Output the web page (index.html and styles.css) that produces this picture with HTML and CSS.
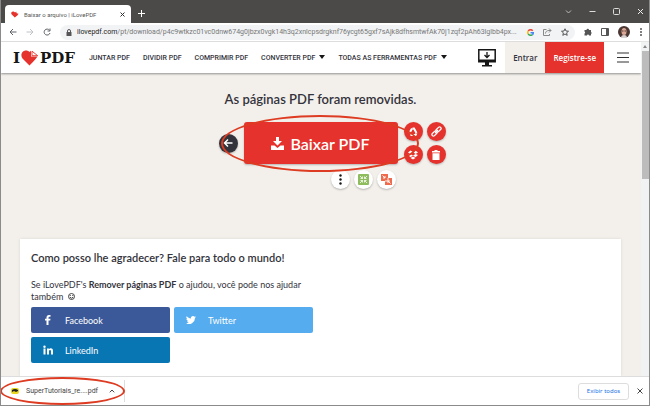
FILE: index.html
```
<!DOCTYPE html>
<html lang="pt">
<head>
  <meta charset="utf-8">
  <title>Baixar o arquivo | iLovePDF</title>
  <link rel="stylesheet" href="styles.css">
</head>
<body>
  <div class="window">
    <!-- Tab strip -->
    <div class="tabs">
      <div class="tab">
        <svg class="favicon" viewBox="0 0 17 15"><path fill="#e5322d" d="M8 14 1 7C-1 3 3-1 7 2l2 1 2-2 1 4 4 1-2 3z"/></svg>
        <span class="tab-title">Baixar o arquivo | iLovePDF</span>
        <button class="icon-btn" aria-label="Fechar guia"><svg width="5" height="5" viewBox="0 0 5 5"><path d="M.5.5l4 4m0-4l-4 4" stroke="#333"/></svg></button>
      </div>
      <button class="icon-btn new-tab" aria-label="Nova guia"><svg width="7" height="7" viewBox="0 0 7 7"><path d="M3.5 0v7M0 3.5h7" stroke="#fff"/></svg></button>
      <div class="window-controls">
        <button class="icon-btn" aria-label="Pesquisar guias"><svg width="7" height="7" viewBox="0 0 7 7" fill="none" stroke="#bbb"><path d="M1 2.500l2.500 2.500L6 2.500"/></svg></button>
        <button class="icon-btn" aria-label="Minimizar"><svg width="7" height="7" viewBox="0 0 7 7"><path d="M0.500 3.500h6" stroke="#ddd"/></svg></button>
        <button class="icon-btn" aria-label="Maximizar"><svg width="7" height="7" viewBox="0 0 7 7"><rect x=".5" y=".5" width="6" height="6" rx="1" fill="none" stroke="#ddd"/></svg></button>
        <button class="icon-btn" aria-label="Fechar"><svg width="7" height="7" viewBox="0 0 7 7"><path d="M1 1l5 5m0-5L1 6" stroke="#eee"/></svg></button>
      </div>
    </div>

    <!-- Address bar -->
    <div class="toolbar">
      <button class="icon-btn" aria-label="Voltar"><svg width="8" height="8" viewBox="0 0 8 8" fill="none" stroke="#5f6368"><path d="M7.500 4H1m3-3L1 4l3 3"/></svg></button>
      <button class="icon-btn" aria-label="Avançar"><svg width="8" height="8" viewBox="0 0 8 8" fill="none" stroke="#bfc2c5"><path d="M.5 4H7M4 1l3 3-3 3"/></svg></button>
      <button class="icon-btn" aria-label="Recarregar"><svg width="8" height="8" viewBox="0 0 8 8" fill="none" stroke="#5f6368"><path d="M6.500 2.200A3 3 0 1 0 7 5M7 .5v2.500H4.500"/></svg></button>
      <div class="address">
        <svg width="6" height="7" viewBox="0 0 6 7"><path fill="#555" d="M.5 3h5v4h-5z"/><path d="M1.500 3V2a1.500 1.500 0 0 1 3 0v1" fill="none" stroke="#555"/></svg>
        <span class="url"><b>ilovepdf.com</b>/pt/download/p4c9wtkzc01vc0dnw674g0jbzx0vgk14h3q2xnlcpsdrgknf76ycgt65gxf7sAjk8dfhsmtwfAk70j1zqf2pAh63lglbb4px...</span>
        <svg class="google" width="7" height="7" viewBox="0 0 14 14" fill="none" stroke-width="3"><path stroke="#ea4335" d="M11.500 3.500A5.500 5.500 0 0 0 2.500 4"/><path stroke="#fbbc05" d="M2.500 4a5.500 5.500 0 0 0 0 6"/><path stroke="#34a853" d="M2.500 10a5.500 5.500 0 0 0 8.500 1"/><path stroke="#4285f4" d="M11 11.500a5.500 5.500 0 0 0 1.500-4H7"/></svg>
        <svg width="9" height="8" viewBox="0 0 9 8" fill="none" stroke="#888"><path d="M3.500 1.500h-3v6h6V6M2.500 5.500c0-2 1.500-3 3.500-3h2M6 .5l2 2-2 2"/></svg>
        <svg width="8" height="8" viewBox="0 0 16 16" fill="none" stroke="#555" stroke-width="2"><path d="M8 1.500l2 4.500 5 .5-3.800 3.200 1.200 5L8 12l-4.400 2.700 1.200-5L1 6.500 6 6z"/></svg>
      </div>
      <button class="icon-btn" aria-label="Extensões"><svg width="8" height="8" viewBox="0 0 16 16"><path fill="#555" d="M1 4h4a2.500 2.500 0 1 1 5 0h4v4a2.500 2.500 0 0 1 0 4v3h-4a2 2 0 0 0-4 0H1v-4a2.200 2.200 0 0 0 0-4z"/></svg></button>
      <button class="icon-btn" aria-label="Painel lateral"><svg width="8" height="8" viewBox="0 0 8 8"><path fill="none" stroke="#555" d="M.5.5h7v7h-7z"/><path fill="#555" d="M5 1h3v6H5z"/></svg></button>
      <button class="icon-btn" aria-label="Perfil"><svg width="12" height="12" viewBox="0 0 12 12"><circle cx="6" cy="6" r="6" fill="#4a3733"/><ellipse cx="6" cy="5.500" rx="2.500" ry="3.500" fill="#dba794"/><path d="M3 12q0-3 3-3t3 3z" fill="#d8cfd0"/><path d="M4 5h1.500M6.500 5H8" stroke="#503832"/></svg></button>
      <button class="icon-btn" aria-label="Menu"><svg width="4" height="8" viewBox="0 0 4 8" fill="#555"><circle cx="2" cy="1" r="1"/><circle cx="2" cy="4" r="1"/><circle cx="2" cy="7" r="1"/></svg></button>
    </div>

    <div class="viewport">
      <div class="page">
        <header class="site-header">
          <a href="#" class="logo" aria-label="I love PDF">
            <span>I</span>
            <svg width="18" height="16" viewBox="0 0 18 16"><path fill="#e5322d" d="M8.500 15.500 1.500 8.500C-1 5 1 .5 5 .5c1.500 0 2.500.5 3.500 1.500L10 .800V6.500h6.500q-1 2-8 9z"/><path fill="#fff" stroke="#e5322d" stroke-width=".9" d="M11 1.200 16.700 5.700H11z"/></svg>
            <span>PDF</span>
          </a>
          <nav class="menu">
            <a href="#">JUNTAR PDF</a>
            <a href="#">DIVIDIR PDF</a>
            <a href="#">COMPRIMIR PDF</a>
            <a href="#" class="has-sub">CONVERTER PDF</a>
            <a href="#" class="has-sub">TODAS AS FERRAMENTAS PDF</a>
          </nav>
          <a href="#" class="desktop" aria-label="Desktop"><svg width="18" height="18" viewBox="0 0 18 18"><path d="M.8.800h16.400v12H.8z" fill="none" stroke="#161616" stroke-width="1.500"/><path d="M1 10.500h16V13H1zM7 13h4v3H7zM4 16h10v1.500H4z" fill="#161616"/><path d="M9 3v5M6.500 6L9 8.500 11.500 6" fill="none" stroke="#161616" stroke-width="1.300"/></svg></a>
          <a href="#" class="login">Entrar</a>
          <a href="#" class="signup">Registre-se</a>
          <button class="icon-btn burger" aria-label="Abrir menu"><svg width="12" height="11" viewBox="0 0 12 11"><path d="M0 1h12M0 5.500h12M0 10h12" stroke="#333" stroke-width="1.200"/></svg></button>
        </header>

        <main>
          <h1>As páginas PDF foram removidas.</h1>
          <div class="download">
            <button class="round back" aria-label="Voltar"><svg width="10" height="10" viewBox="0 0 10 10" fill="none" stroke="#fff" stroke-width="1.500"><path d="M9.500 5H1.500M5 1.500L1.500 5 5 8.500"/></svg></button>
            <button class="download-btn">
              <svg width="13" height="13" viewBox="0 0 13 13" fill="#fff"><path d="M5 0h3v4h3L6.500 8.500 2 4h3z"/><path d="M0 8.500h3.500l3 2.500 3-2.500H13V13H0z"/></svg>
              Baixar PDF
            </button>
            <div class="share">
              <button class="round red" aria-label="Google Drive"><svg width="10" height="10" viewBox="0 0 10 10" fill="none" stroke="#fff" stroke-width="2"><path d="M4 1.500L1.500 6M4.500 1.500h1.500L8.500 6M2.500 8h5L8.500 6"/></svg></button>
              <button class="round red" aria-label="Copiar link"><svg width="11" height="11" viewBox="0 0 22 22" fill="none" stroke="#fff" stroke-width="2.500"><rect x="9" y="4" width="12" height="6" rx="3" transform="rotate(-45 15 7)"/><rect x="1" y="12" width="12" height="6" rx="3" transform="rotate(-45 7 15)"/><path d="M8 14l6-6"/></svg></button>
              <button class="round red" aria-label="Dropbox"><svg width="10" height="10" viewBox="0 0 10 10" fill="#fff"><path d="M2.500.5L5 2 2.500 4 0 2.500zM7.500.5L10 2.500 7.500 4 5 2zM0 5l2.500-1L5 5.500 2.500 7.200zM10 5L7.500 4 5 5.500l2.500 1.700zM2.500 8L5 6.500 7.500 8 5 9.500z"/></svg></button>
              <button class="round red" aria-label="Excluir"><svg width="8" height="10" viewBox="0 0 8 10" fill="#fff"><path d="M2.500 0h3v1H8v1.500H0V1h2.500zM.5 3.200h7V10h-7z"/></svg></button>
            </div>
            <div class="more">
              <button class="round white" aria-label="Mais"><svg width="3" height="11" viewBox="0 0 3 11" fill="#161616"><circle cx="1.500" cy="1.500" r="1.200"/><circle cx="1.500" cy="5.500" r="1.200"/><circle cx="1.500" cy="9.500" r="1.200"/></svg></button>
              <button class="round white" aria-label="Comprimir PDF"><svg width="11" height="11" viewBox="0 0 11 11"><rect width="11" height="11" rx="1" fill="#8fbc5d"/><path d="M2 2l2.500 2.500M9 2L6.500 4.500M2 9l2.500-2.500M9 9L6.500 6.500M4.500 2.500v2h-2M6.500 2.500v2h2M4.500 8.500v-2h-2M6.500 8.500v-2h2" fill="none" stroke="#fff" stroke-width=".8"/></svg></button>
              <button class="round white" aria-label="Juntar PDF"><svg width="11" height="11" viewBox="0 0 11 11"><path d="M0 0h7v4h4v7H4V7H0z" fill="#ee6c4d"/><path d="M1.500 1.500L4 4M4 2v2H2M9.500 9.500L7 7M7 9V7h2M4 7h3V4" fill="none" stroke="#fff" stroke-width=".9"/></svg></button>
            </div>
            <span class="mark"></span>
          </div>

          <section class="thanks">
            <h2>Como posso lhe agradecer? Fale para todo o mundo!</h2>
            <p>Se iLovePDF's <strong>Remover páginas PDF</strong> o ajudou, você pode nos ajudar<br>
              também <svg class="smile" width="7" height="7" viewBox="0 0 14 14" fill="none" stroke="#333" stroke-width="1.800"><circle cx="7" cy="7" r="6"/><path d="M3.500 8q3.500 5 7 0M4.500 4v2M9.500 4v2"/></svg></p>
            <div class="social">
              <a href="#" class="facebook"><svg viewBox="0 0 10 10"><path fill="#fff" d="M3.500 10V5.500H2V3.800h1.500V2.500Q3.500 0 6 0h1.500v1.700h-1q-1 0-1 1v1.100h2l-.3 1.700H5.500V10z"/></svg>Facebook</a>
              <a href="#" class="twitter"><svg viewBox="0 0 24 24"><path fill="#fff" d="M24 4.600c-.9.400-1.800.7-2.800.8 1-.6 1.800-1.600 2.200-2.700-1 .6-2 1-3.100 1.200a4.900 4.900 0 0 0-8.400 4.500C7.700 8.200 4.100 6.300 1.700 3.200a4.900 4.900 0 0 0 1.500 6.600c-.8 0-1.600-.2-2.200-.6 0 2.300 1.600 4.400 3.900 4.900-.7.200-1.500.2-2.200.1.600 2 2.400 3.400 4.600 3.400A9.900 9.900 0 0 1 0 19.500a14 14 0 0 0 21.500-12.400c1-.7 1.800-1.600 2.500-2.500z"/></svg>Twitter</a>
              <a href="#" class="linkedin"><svg viewBox="0 0 10 10" fill="#fff"><path d="M.5 3.500h2V9.500h-2zM4 3.500h1.900v.8Q6.500 3.300 7.800 3.300 10 3.300 10 6v3.500H8V6.300Q8 5 7 5T6 6.300v3.200H4z"/><circle cx="1.500" cy="1.700" r="1.200"/></svg>LinkedIn</a>
            </div>
          </section>
        </main>
      </div>
      <div class="scrollbar"><span class="arrow"></span><span class="thumb"></span></div>
    </div>

    <!-- Downloads bar -->
    <footer class="downloads">
      <div class="file">
        <svg width="8" height="6" viewBox="0 0 8 6"><rect width="8" height="6" rx="2" fill="#e8d51d"/><path d="M1 2q3-2 6 0v1L5 4 3 3 1 4z" fill="#222"/></svg>
        <span>SuperTutoriais_re....pdf</span>
        <button class="icon-btn" aria-label="Opções do arquivo"><svg width="6" height="4" viewBox="0 0 6 4"><path d="M.8 3.300L3 1l2.200 2.300" fill="none" stroke="#444"/></svg></button>
        <span class="mark"></span>
      </div>
      <button class="show-all">Exibir todos</button>
      <button class="icon-btn" aria-label="Fechar barra"><svg width="6" height="6" viewBox="0 0 6 6"><path d="M.5.5l5 5m0-5l-5 5" stroke="#444"/></svg></button>
    </footer>
  </div>
</body>
</html>
```
FILE: styles.css
```
* {
  box-sizing: border-box;
}
body {
  margin: 0;
  font-family: Lato, sans-serif;
  color: #33333b;
}
a {
  color: inherit;
  text-decoration: none;
}
svg {
  display: block;
  flex: none;
}
button {
  font-family: inherit;
  padding: 0;
  border: none;
  cursor: pointer;
}
.icon-btn {
  background: none;
  display: flex;
  align-items: center;
  justify-content: center;
}
.window {
  display: flex;
  flex-direction: column;
  height: 100vh;
  border: 1px solid #8b8b8b;
  border-top: none;
  overflow: hidden;
  background: #fff;
}

/* browser tabs */
.tabs {
  display: flex;
  align-items: center;
  flex: none;
  height: 23px;
  padding-left: 4px;
  background: #4b4a48;
}
.tab {
  display: flex;
  align-items: center;
  align-self: flex-end;
  width: 126px;
  height: 18px;
  padding: 0 6px;
  gap: 5px;
  border-radius: 4px 4px 0 0;
  background: #fff;
}
.favicon {
  width: 8px;
  height: 7px;
}
.tab-title {
  flex: 1;
  font-family: Roboto, sans-serif;
  font-size: 6px;
  white-space: nowrap;
  color: #555;
}
.new-tab {
  margin: 4px 0 0 7px;
}
.window-controls {
  display: flex;
  gap: 17px;
  margin-left: auto;
  padding-right: 5px;
}

/* address bar */
.toolbar {
  display: flex;
  align-items: center;
  flex: none;
  gap: 9px;
  height: 19px;
  padding: 0 6px 0 8px;
  border-bottom: 1px solid #e4e4e4;
}
.address {
  display: flex;
  align-items: center;
  flex: 1;
  min-width: 0;
  gap: 9px;
  height: 15px;
  padding: 0 6px;
  border-radius: 8px;
  background: #f1f3f4;
}
.url {
  flex: 1;
  margin-left: -4px;
  min-width: 0;
  overflow: hidden;
  font-family: Roboto, sans-serif;
  font-size: 7px;
  white-space: nowrap;
  color: #777;
}
.url b {
  font-weight: 400;
  color: #222;
}

.viewport {
  display: flex;
  flex: 1;
  min-height: 0;
}
.page {
  display: flex;
  flex-direction: column;
  flex: 1;
  min-width: 0;
  background: #f3f0ec;
}

/* site header */
.site-header {
  display: flex;
  align-items: center;
  flex: none;
  height: 31px;
  padding-left: 12px;
  background: #fff;
  box-shadow: 0 1px 2px rgba(0, 0, 0, 0.4);
}
.logo {
  display: flex;
  align-items: center;
  gap: 1px;
  font-family: "DejaVu Serif", serif;
  font-size: 15px;
  font-weight: 700;
  color: #161616;
}
.menu {
  display: flex;
  gap: 13px;
  margin-left: 14px;
  font-family: Roboto, sans-serif;
  font-size: 7px;
  font-weight: 500;
  white-space: nowrap;
}
.has-sub::after {
  content: "";
  display: inline-block;
  margin-left: 4px;
  border: 3px solid transparent;
  border-top: 4px solid #161616;
  border-bottom: none;
  vertical-align: 1px;
}
.desktop {
  margin-left: auto;
  margin-right: 9px;
}
.login,
.signup {
  display: flex;
  align-items: center;
  align-self: stretch;
  padding: 0 8px;
  font-family: "Open Sans", sans-serif;
  font-size: 8px;
  font-weight: 600;
}
.login {
  background: #f3f0ec;
}
.signup {
  background: #e5322d;
  color: #fff;
}
.burger {
  margin: 0 12px 0 13px;
}

main {
  display: flex;
  flex-direction: column;
  flex: 1;
  min-height: 0;
  padding: 16px 20px 0 19px;
}
h1 {
  margin: 0;
  font-size: 13px;
  line-height: 20px;
  font-weight: 600;
  text-align: center;
}
.download {
  position: relative;
  display: grid;
  grid-template-columns: 1fr auto 1fr;
  align-items: center;
  gap: 6px;
  margin-top: 13px;
}
.round {
  display: flex;
  align-items: center;
  justify-content: center;
  width: 19px;
  height: 19px;
  border-radius: 50%;
  box-shadow: 0 1px 2px rgba(0, 0, 0, 0.25);
}
.back {
  justify-self: end;
  background: #33333b;
}
.red {
  background: #e5322d;
}
.white {
  background: #fff;
}
.download-btn {
  display: flex;
  align-items: center;
  justify-content: center;
  gap: 6px;
  width: 154px;
  height: 42px;
  border-radius: 3px;
  background: #e5322d;
  box-shadow: 0 1px 2px rgba(0, 0, 0, 0.25);
  color: #fff;
  font-size: 16px;
  font-weight: 600;
}
.share {
  display: grid;
  grid-template-columns: 19px 19px;
  gap: 4px;
}
.more {
  grid-column: 2;
  display: flex;
  justify-content: flex-end;
  gap: 4px;
  padding-right: 2px;
}

/* red pen rings */
.mark {
  position: absolute;
  border: 2px solid #dd3c22;
  border-radius: 50%;
  pointer-events: none;
}
.download .mark {
  top: -7px;
  left: 50%;
  width: 198px;
  height: 57px;
  margin-left: -100px;
}

.thanks {
  flex: 1;
  margin-top: 50px;
  padding: 10px 11px;
  background: #fff;
  box-shadow: 0 0 3px rgba(0, 0, 0, 0.1);
}
h2 {
  margin: 0 0 12px;
  font-size: 11px;
  line-height: 18px;
  font-weight: 600;
}
.thanks p {
  margin: 0 0 4px;
  font-size: 9px;
  line-height: 12px;
}
.smile {
  display: inline-block;
  margin-left: 2px;
}
.social {
  display: grid;
  grid-template-columns: 139px 139px;
  gap: 4px;
}
.social a {
  display: flex;
  align-items: center;
  gap: 12px;
  height: 26px;
  padding-left: 12px;
  border-radius: 2px;
  color: #fff;
  font-size: 9px;
}
.social svg {
  width: 10px;
  height: 10px;
}
.facebook {
  background: #3b5998;
}
.twitter {
  background: #55acee;
}
.linkedin {
  background: #0976b4;
}

.scrollbar {
  display: flex;
  flex-direction: column;
  align-items: center;
  width: 8px;
  background: #f1f2f3;
}
.arrow {
  margin: 3px 0;
  border: 2px solid transparent;
  border-top: none;
  border-bottom: 3px solid #888;
}
.thumb {
  width: 7px;
  height: 128px;
  background: #bcbcbc;
}

/* downloads */
.downloads {
  display: flex;
  align-items: center;
  flex: none;
  height: 29px;
  padding-right: 6px;
  border-top: 1px solid #ddd;
  background: #fff;
}
.file {
  position: relative;
  display: flex;
  align-items: center;
  gap: 7px;
  width: 124px;
  height: 22px;
  padding: 0 9px 0 10px;
  border-right: 1px solid #ddd;
  font-family: Roboto, sans-serif;
  font-size: 7px;
  white-space: nowrap;
  color: #444;
}
.file .icon-btn {
  margin-left: auto;
}
.file .mark {
  inset: -3px -1px -3px -1px;
}
.show-all {
  width: 51px;
  height: 17px;
  margin: 0 8px 0 auto;
  border: 1px solid #ddd;
  border-radius: 3px;
  background: #fff;
  color: #1a73e8;
  font-family: "Noto Sans", sans-serif;
  font-size: 6px;
}
```
